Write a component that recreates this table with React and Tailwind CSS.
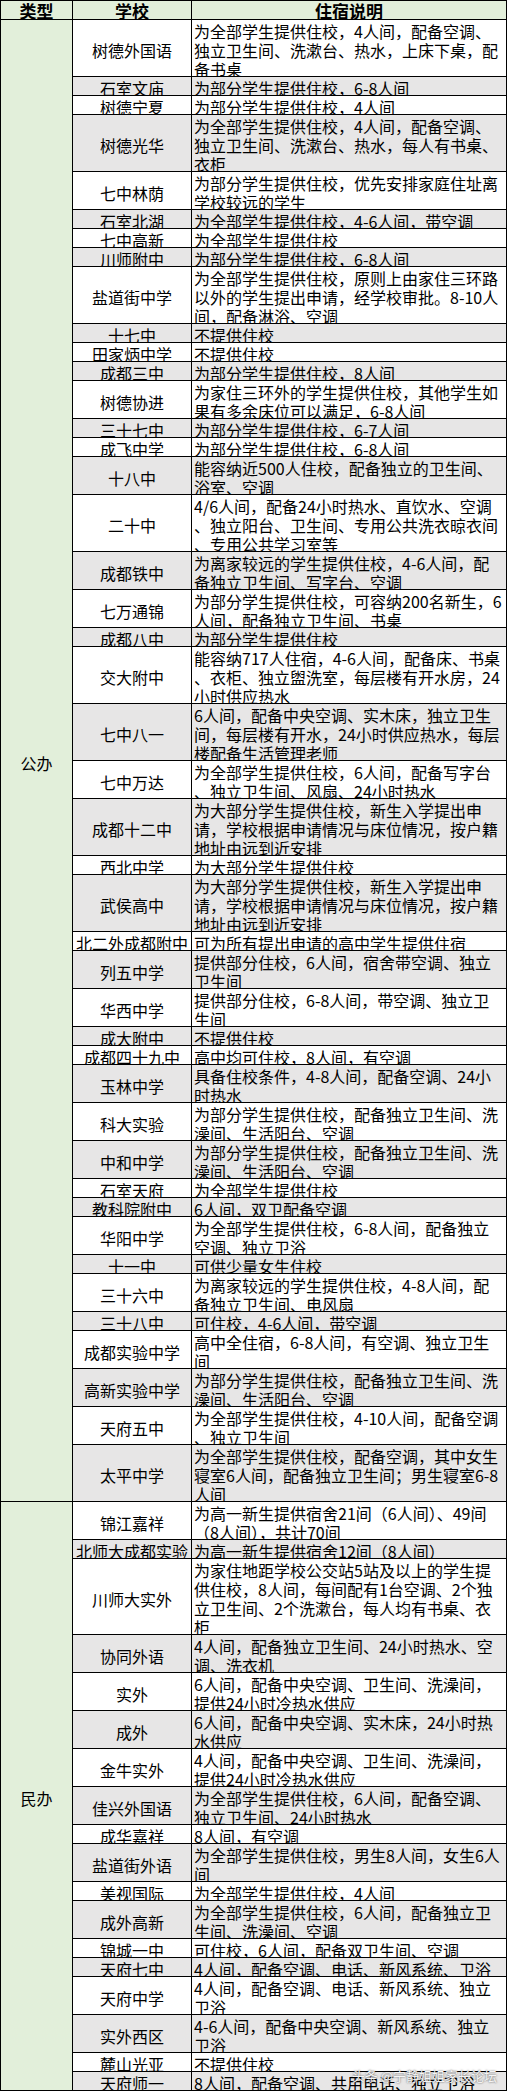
const H = {
  1: "h-[19px]",
  2: "h-[38px]",
  3: "h-[57px]",
  4: "h-[76px]",
};

const gongban = [
  ["树德外国语", ["为全部学生提供住校，4人间，配备空调、", "独立卫生间、洗漱台、热水，上床下桌，配", "备书桌"]],
  ["石室文庙", ["为部分学生提供住校，6-8人间"]],
  ["树德宁夏", ["为部分学生提供住校，4人间"]],
  ["树德光华", ["为全部学生提供住校，4人间，配备空调、", "独立卫生间、洗漱台、热水，每人有书桌、", "衣柜"]],
  ["七中林荫", ["为部分学生提供住校，优先安排家庭住址离", "学校较远的学生"]],
  ["石室北湖", ["为全部学生提供住校，4-6人间，带空调"]],
  ["七中高新", ["为全部学生提供住校"]],
  ["川师附中", ["为部分学生提供住校，6-8人间"]],
  ["盐道街中学", ["为全部学生提供住校，原则上由家住三环路", "以外的学生提出申请，经学校审批。8-10人", "间，配备淋浴、空调"]],
  ["十七中", ["不提供住校"]],
  ["田家炳中学", ["不提供住校"]],
  ["成都三中", ["为部分学生提供住校，8人间"]],
  ["树德协进", ["为家住三环外的学生提供住校，其他学生如", "果有多余床位可以满足，6-8人间"]],
  ["三十七中", ["为部分学生提供住校，6-7人间"]],
  ["成飞中学", ["为部分学生提供住校，6-8人间"]],
  ["十八中", ["能容纳近500人住校，配备独立的卫生间、", "浴室、空调"]],
  ["二十中", ["4/6人间，配备24小时热水、直饮水、空调", "、独立阳台、卫生间、专用公共洗衣晾衣间", "、专用公共学习室等"]],
  ["成都铁中", ["为离家较远的学生提供住校，4-6人间，配", "备独立卫生间、写字台、空调"]],
  ["七万通锦", ["为部分学生提供住校，可容纳200名新生，6", "人间，配备独立卫生间、书桌"]],
  ["成都八中", ["为部分学生提供住校"]],
  ["交大附中", ["能容纳717人住宿，4-6人间，配备床、书桌", "、衣柜、独立盥洗室，每层楼有开水房，24", "小时供应热水"]],
  ["七中八一", ["6人间，配备中央空调、实木床，独立卫生", "间，每层楼有开水，24小时供应热水，每层", "楼配备生活管理老师"]],
  ["七中万达", ["为全部学生提供住校，6人间，配备写字台", "、独立卫生间、风扇、24小时热水"]],
  ["成都十二中", ["为大部分学生提供住校，新生入学提出申", "请，学校根据申请情况与床位情况，按户籍", "地址由远到近安排"]],
  ["西北中学", ["为大部分学生提供住校"]],
  ["武侯高中", ["为大部分学生提供住校，新生入学提出申", "请，学校根据申请情况与床位情况，按户籍", "地址由远到近安排"]],
  ["北二外成都附中", ["可为所有提出申请的高中学生提供住宿"]],
  ["列五中学", ["提供部分住校，6人间，宿舍带空调、独立", "卫生间"]],
  ["华西中学", ["提供部分住校，6-8人间，带空调、独立卫", "生间"]],
  ["成大附中", ["不提供住校"]],
  ["成都四十九中", ["高中均可住校，8人间，有空调"]],
  ["玉林中学", ["具备住校条件，4-8人间，配备空调、24小", "时热水"]],
  ["科大实验", ["为部分学生提供住校，配备独立卫生间、洗", "澡间、生活阳台、空调"]],
  ["中和中学", ["为部分学生提供住校，配备独立卫生间、洗", "澡间、生活阳台、空调"]],
  ["石室天府", ["为全部学生提供住校"]],
  ["教科院附中", ["6人间，双卫配备空调"]],
  ["华阳中学", ["为全部学生提供住校，6-8人间，配备独立", "空调、独立卫浴"]],
  ["十一中", ["可供少量女生住校"]],
  ["三十六中", ["为离家较远的学生提供住校，4-8人间，配", "备独立卫生间、电风扇"]],
  ["三十八中", ["可住校，4-6人间，带空调"]],
  ["成都实验中学", ["高中全住宿，6-8人间，有空调、独立卫生", "间"]],
  ["高新实验中学", ["为部分学生提供住校，配备独立卫生间、洗", "澡间、生活阳台、空调"]],
  ["天府五中", ["为全部学生提供住校，4-10人间，配备空调", "、独立卫生间"]],
  ["太平中学", ["为全部学生提供住校，配备空调，其中女生", "寝室6人间，配备独立卫生间；男生寝室6-8", "人间"]],
];

const minban = [
  ["锦江嘉祥", ["为高一新生提供宿舍21间（6人间）、49间", "（8人间），共计70间"]],
  ["北师大成都实验", ["为高一新生提供宿舍12间（8人间）"]],
  ["川师大实外", ["为家住地距学校公交站5站及以上的学生提", "供住校，8人间，每间配有1台空调、2个独", "立卫生间、2个洗漱台，每人均有书桌、衣", "柜"]],
  ["协同外语", ["4人间，配备独立卫生间、24小时热水、空", "调、洗衣机"]],
  ["实外", ["6人间，配备中央空调、卫生间、洗澡间，", "提供24小时冷热水供应"]],
  ["成外", ["6人间，配备中央空调、实木床，24小时热", "水供应"]],
  ["金牛实外", ["4人间，配备中央空调、卫生间、洗澡间，", "提供24小时冷热水供应"]],
  ["佳兴外国语", ["为全部学生提供住校，6人间，配备空调、", "独立卫生间、24小时热水"]],
  ["成华嘉祥", ["8人间，有空调"]],
  ["盐道街外语", ["为全部学生提供住校，男生8人间，女生6人", "间"]],
  ["美视国际", ["为全部学生提供住校，4人间"]],
  ["成外高新", ["为全部学生提供住校，6人间，配备独立卫", "生间、洗澡间、空调"]],
  ["锦城一中", ["可住校，6人间，配备双卫生间、空调"]],
  ["天府七中", ["4人间，配备空调、电话、新风系统、卫浴"]],
  ["天府中学", ["4人间，配备空调、电话、新风系统、独立", "卫浴"]],
  ["实外西区", ["4-6人间，配备中央空调、新风系统、独立", "卫浴"]],
  ["麓山光亚", ["不提供住校"]],
  ["天府师一", ["8人间，配备空调、共用电话、独立卫浴"]],
];

const Row = ({ school, lines, gray }) => (
  <div
    className={`flex ${H[lines.length]} border-b border-black ${gray ? "bg-[#e7e6e6]" : "bg-white"}`}
  >
    <div className="w-[119px] shrink-0 border-r border-black flex items-center justify-center pt-[4px] overflow-hidden whitespace-nowrap leading-[16px]">
      {school}
    </div>
    <div className="flex-1 border-r border-black pl-[2px] overflow-hidden">
      {lines.map((l, i) => (
        <div key={i} className="h-[19px] pt-[3px] leading-[16px] whitespace-nowrap">
          {l}
        </div>
      ))}
    </div>
  </div>
);

const Group = ({ label, rows }) => (
  <div className="flex">
    <div className="w-[72px] shrink-0 bg-[#e2efda] border-r border-b border-black flex items-center justify-center pt-[4px] leading-[16px]">
      {label}
    </div>
    <div className="flex-1 flex flex-col">
      {rows.map(([school, lines], i) => (
        <Row key={school + i} school={school} lines={lines} gray={i % 2 === 1} />
      ))}
    </div>
  </div>
);

export default function App() {
  return (
    <div className="relative w-[507px] bg-white border-l border-t border-black text-black text-[16px] font-['Noto_Sans_CJK_SC','Liberation_Sans',sans-serif]">

      {/* HEADER */}

      <div className="flex h-[19px] bg-[#e2efda] border-b border-black font-bold text-[17px] leading-[17px]">
        <div className="w-[72px] shrink-0 border-r border-black flex items-center justify-center pt-[1px]">
          类型
        </div>
        <div className="w-[119px] shrink-0 border-r border-black flex items-center justify-center pt-[1px]">
          学校
        </div>
        <div className="flex-1 border-r border-black flex items-center justify-center pt-[1px]">
          住宿说明
        </div>
      </div>

      <Group label="公办" rows={gongban} />
      <Group label="民办" rows={minban} />

      {/* WATERMARK */}

      <span className="absolute right-[10px] bottom-[6px] text-[13px] text-[#f4f4f4] whitespace-nowrap [text-shadow:0_0_2px_rgba(0,0,0,0.7)]">
        头条 @宁静姐姐家长论坛
      </span>
    </div>
  );
}
